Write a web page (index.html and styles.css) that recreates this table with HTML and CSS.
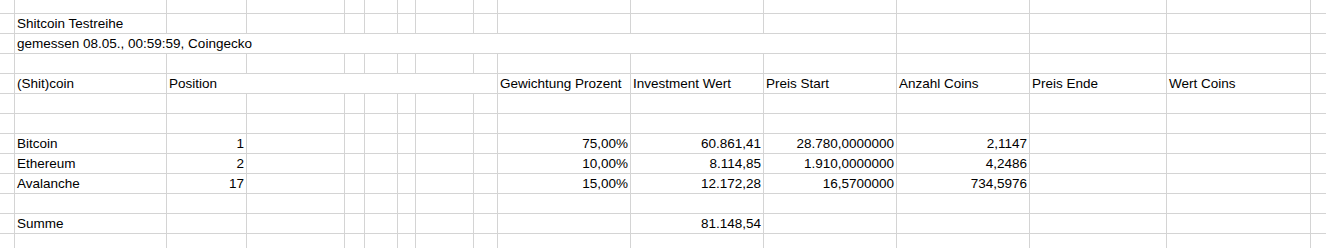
FILE: index.html
```html
<!DOCTYPE html>
<html lang="de">
<head>
<meta charset="utf-8">
<title>Shitcoin Testreihe</title>
<link rel="stylesheet" href="styles.css">
</head>
<body>
<div class="sheet">
  <div class="row first"><span></span><span></span><span></span><span></span><span></span><span></span><span></span><span></span><span></span><span></span><span></span><span></span><span></span><span></span><span></span><span></span></div>
  <div class="row"><span></span><span>Shitcoin Testreihe</span><span></span><span></span><span></span><span></span><span></span><span></span><span></span><span></span><span></span><span></span><span></span><span></span><span></span><span></span></div>
  <div class="row"><span></span><span class="wide">gemessen 08.05., 00:59:59, Coingecko</span><span></span><span></span><span></span><span></span></div>
  <div class="row"><span></span><span></span><span></span><span></span><span></span><span></span><span></span><span></span><span></span><span></span><span></span><span></span><span></span><span></span><span></span><span></span></div>
  <div class="row"><span></span><span>(Shit)coin</span><span class="pos">Position</span><span>Gewichtung Prozent</span><span>Investment Wert</span><span>Preis Start</span><span>Anzahl Coins</span><span>Preis Ende</span><span>Wert Coins</span><span></span></div>
  <div class="row"><span></span><span></span><span></span><span></span><span></span><span></span><span></span><span></span><span></span><span></span><span></span><span></span><span></span><span></span><span></span><span></span></div>
  <div class="row"><span></span><span></span><span></span><span></span><span></span><span></span><span></span><span></span><span></span><span></span><span></span><span></span><span></span><span></span><span></span><span></span></div>
  <div class="row"><span></span><span>Bitcoin</span><span class="num">1</span><span></span><span></span><span></span><span></span><span></span><span></span><span class="num">75,00%</span><span class="num">60.861,41</span><span class="num">28.780,0000000</span><span class="num">2,1147</span><span></span><span></span><span></span></div>
  <div class="row"><span></span><span>Ethereum</span><span class="num">2</span><span></span><span></span><span></span><span></span><span></span><span></span><span class="num">10,00%</span><span class="num">8.114,85</span><span class="num">1.910,0000000</span><span class="num">4,2486</span><span></span><span></span><span></span></div>
  <div class="row"><span></span><span>Avalanche</span><span class="num">17</span><span></span><span></span><span></span><span></span><span></span><span></span><span class="num">15,00%</span><span class="num">12.172,28</span><span class="num">16,5700000</span><span class="num">734,5976</span><span></span><span></span><span></span></div>
  <div class="row"><span></span><span></span><span></span><span></span><span></span><span></span><span></span><span></span><span></span><span></span><span></span><span></span><span></span><span></span><span></span><span></span></div>
  <div class="row"><span></span><span>Summe</span><span></span><span></span><span></span><span></span><span></span><span></span><span></span><span></span><span class="num">81.148,54</span><span></span><span></span><span></span><span></span><span></span></div>
  <div class="row"><span></span><span></span><span></span><span></span><span></span><span></span><span></span><span></span><span></span><span></span><span></span><span></span><span></span><span></span><span></span><span></span></div>
</div>
</body>
</html>
```
FILE: styles.css
```css
* { box-sizing: border-box; }
html, body { margin: 0; padding: 0; background: #fff; }
body {
  font-family: "Liberation Sans", Arial, sans-serif;
  font-size: 13.5px;
  color: #000;
  overflow: hidden;
}
.sheet {
  width: 1326px;
  height: 248px;
  overflow: hidden;
}
.row {
  display: grid;
  grid-template-columns: 15px 152px 80px 98px 20px 33px 18px 58px 24px 133px 133px 133px 133px 137px 144px 16px;
  height: 20px;
}
.row.first { height: 14px; }
.row > span {
  display: block;
  border-right: 1px solid #d4d4d4;
  border-bottom: 1px solid #d4d4d4;
  padding: 1px 2px 0 2px;
  line-height: 18px;
  white-space: nowrap;
  overflow: visible;
}
.row.first > span { line-height: 13px; padding-top: 0; }
.num { text-align: right; }
.wide { grid-column: span 11; }
.pos { grid-column: span 7; }
```
